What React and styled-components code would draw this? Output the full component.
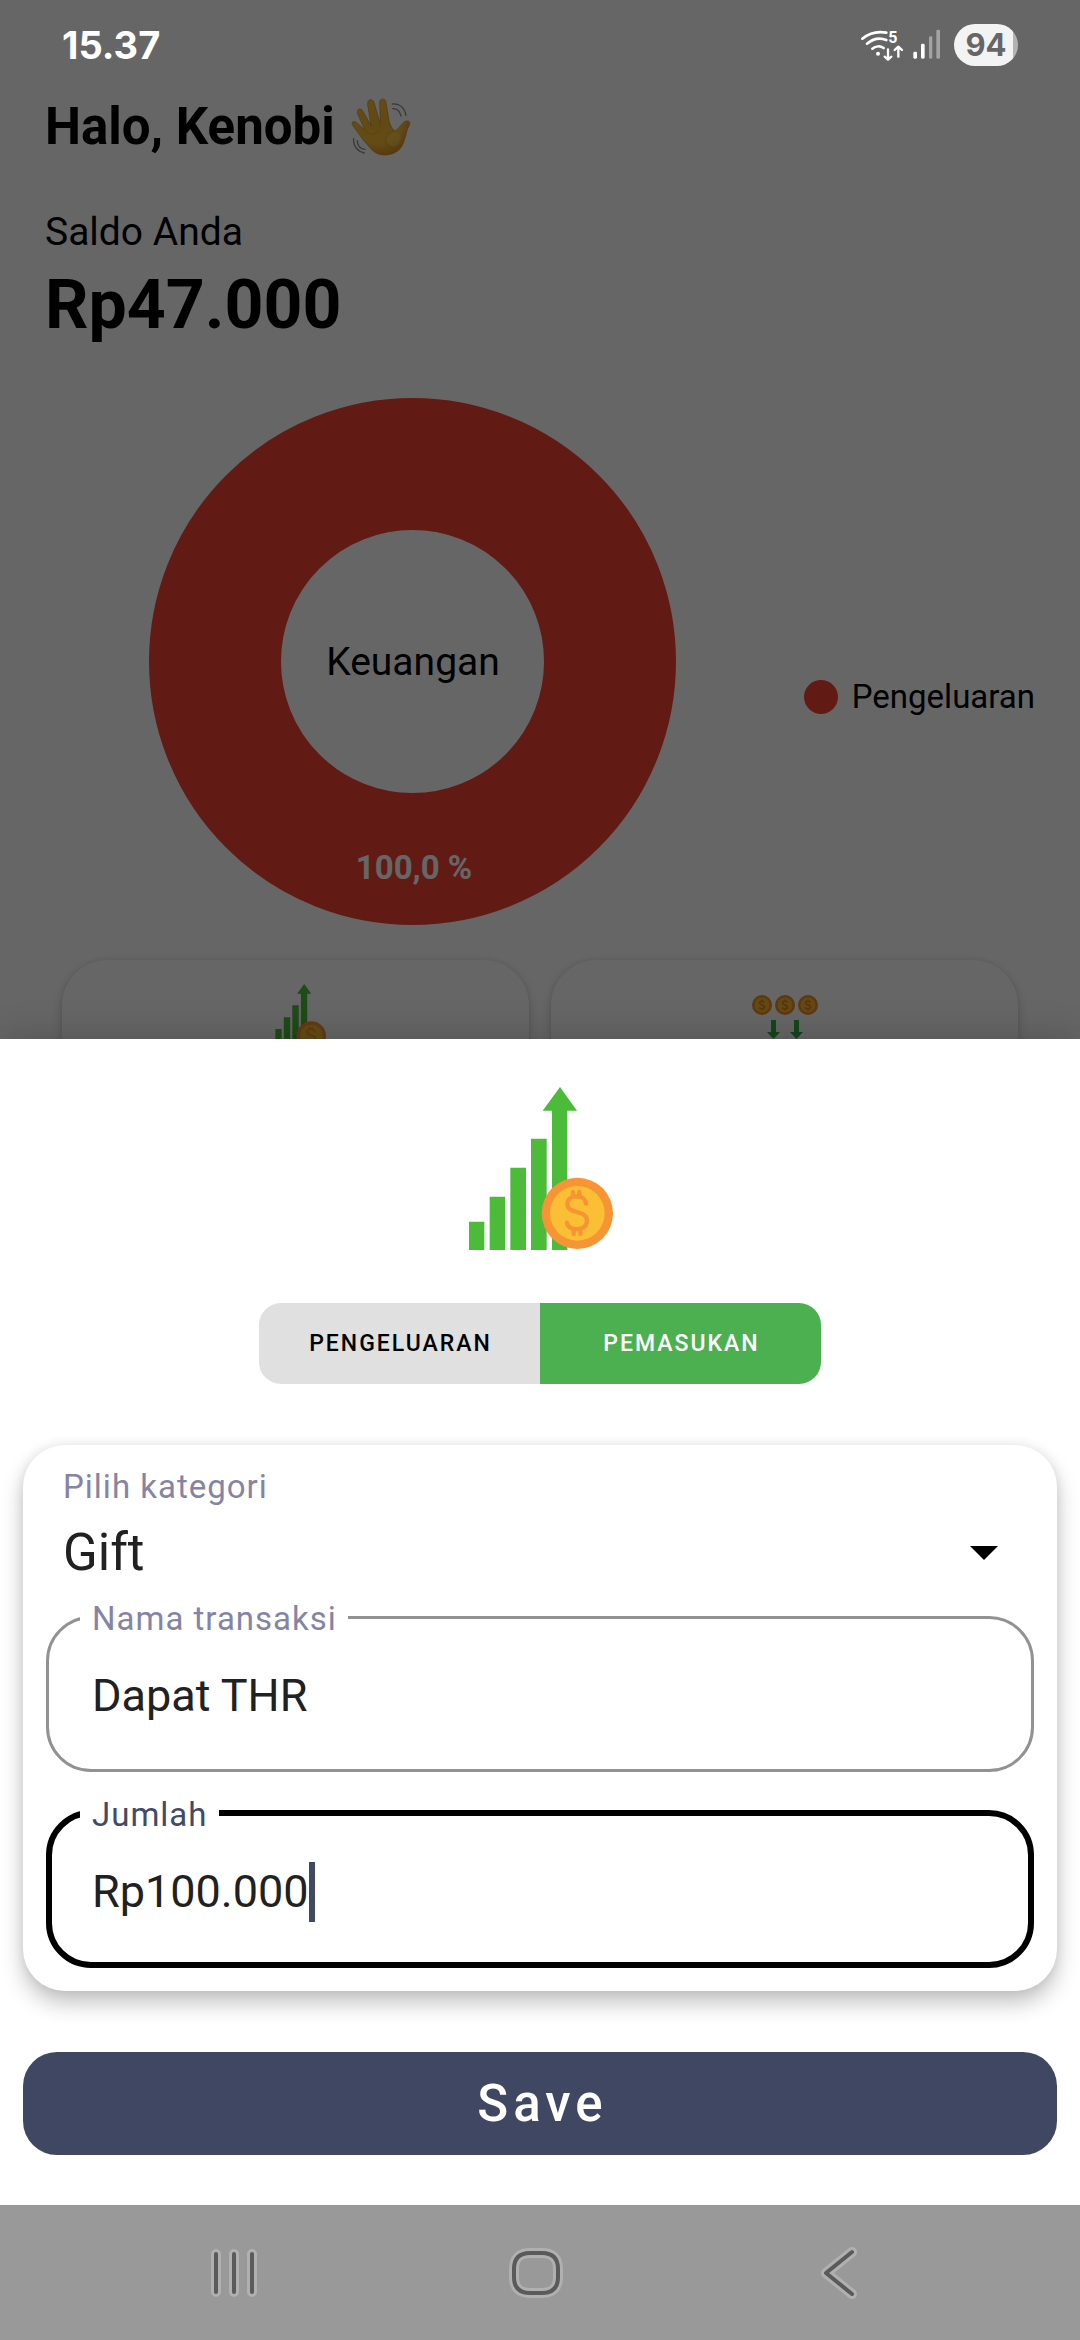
import React, { useState } from "react";
import styled, { createGlobalStyle, css } from "styled-components";

const GlobalStyle = createGlobalStyle`
  *, *::before, *::after { box-sizing: border-box; }
  body {
    margin: 0;
    background: #fff;
    color: #000;
    font-family: Roboto, "Noto Sans", sans-serif;
  }
  button, input, select { font: inherit; margin: 0; }
`;

/* The dashboard and the modal layer share one grid cell, so the layer lies over it. */
const Screen = styled.div`
  display: grid;
  grid-template-rows: minmax(100vh, auto);
  overflow: hidden;
`;

const Home = styled.main`
  grid-area: 1 / 1;
  height: 0;
  min-height: 100%;
  overflow: hidden;
  display: flex;
  flex-direction: column;
  padding: 97px 45px 0;
  background: #fff;
`;

const Modal = styled.div`
  grid-area: 1 / 1;
  z-index: 1;
  display: flex;
  flex-direction: column;
  background: rgba(0, 0, 0, 0.6);
`;

const Greeting = styled.h1`
  display: flex;
  align-items: center;
  gap: 16px;
  margin: 0 0 52px;
  font-size: 51px;
  line-height: 60px;
  font-weight: 700;
`;

const BalanceLabel = styled.p`
  margin: 0 0 10px;
  font-size: 39px;
  line-height: 46px;
`;

const Balance = styled.p`
  margin: 0;
  font-size: 68px;
  line-height: 80px;
  font-weight: 700;
`;

const ChartRow = styled.section`
  display: flex;
  align-items: center;
  gap: 24px;
  margin-top: 53px;
`;

const ChartArea = styled.div`
  flex: 1;
  display: flex;
  justify-content: center;
`;

const Legend = styled.ul`
  list-style: none;
  margin: 0;
  padding: 70px 0 0;
`;

const LegendItem = styled.li`
  display: flex;
  align-items: center;
  gap: 14px;
  font-size: 33px;
  line-height: 40px;

  &::before {
    content: "";
    width: 34px;
    height: 34px;
    border-radius: 50%;
    background: ${(p) => p.$color};
  }
`;

const Cards = styled.section`
  display: grid;
  grid-template-columns: 1fr 1fr;
  gap: 22px;
  padding: 0 17px;
  margin-top: 35px;
`;

const HomeCard = styled.div`
  display: flex;
  justify-content: center;
  padding: 24px 24px 120px;
  border-radius: 45px;
  background: #fff;
  box-shadow: 0 4px 12px rgba(0, 0, 0, 0.18), 0 0 4px rgba(0, 0, 0, 0.08);
`;

const StatusBar = styled.header`
  display: flex;
  align-items: center;
  justify-content: space-between;
  height: 90px;
  padding: 0 62px;
  color: #fff;
`;

const Clock = styled.time`
  font-family: Inter, Roboto, sans-serif;
  font-size: 38px;
  line-height: 46px;
  font-weight: 700;
`;

const StatusIcons = styled.div`
  display: flex;
  align-items: center;
  gap: 12px;
`;

const Battery = styled.span`
  display: flex;
  align-items: center;
  justify-content: center;
  width: 64px;
  height: 42px;
  border-radius: 21px;
  background: linear-gradient(to right, #f3f3f3 92%, #b3b3b3 92%);
  color: #666;
  font-family: Inter, Roboto, sans-serif;
  font-size: 31px;
  line-height: 40px;
  font-weight: 700;
`;

const Sheet = styled.form`
  display: flex;
  flex-direction: column;
  margin-top: auto;
  padding: 48px 23px 50px;
  background: #fff;
  box-shadow: 0 0 36px rgba(0, 0, 0, 0.2);
`;

const SheetIcon = styled.div`
  display: flex;
  justify-content: center;
  margin-bottom: 53px;
`;

const Toggle = styled.div`
  align-self: center;
  display: flex;
  width: 562px;
  max-width: 100%;
  height: 81px;
  border-radius: 22px;
  overflow: hidden;
`;

const ToggleButton = styled.button`
  flex: 1;
  border: 0;
  padding: 0 0 0 2px;
  font-size: 23px;
  line-height: 28px;
  font-weight: 500;
  letter-spacing: 2px;
  color: ${(p) => (p.$active ? "#fff" : "#000")};
  background: ${(p) => (p.$active ? "#4caf50" : "#e0e0e0")};
`;

const FormCard = styled.div`
  display: flex;
  flex-direction: column;
  margin: 61px 0;
  padding: 22px 23px 23px;
  border-radius: 42px;
  background: #fff;
  box-shadow: 0 12px 22px rgba(0, 0, 0, 0.24), 0 0 12px rgba(0, 0, 0, 0.08);
`;

const labelText = css`
  font-size: 33px;
  line-height: 40px;
  letter-spacing: 1px;
  color: ${(p) => (p.$focused ? "#424a66" : "#8484a4")};
`;

const SelectLabel = styled.label`
  ${labelText}
  padding-left: 17px;
`;

const SelectRow = styled.div`
  display: flex;
  align-items: center;
  margin: 16px 0 12px;
  padding: 0 36px 0 17px;
`;

const Select = styled.select`
  flex: 1;
  appearance: none;
  border: 0;
  padding: 0;
  background: transparent;
  color: #212121;
  font-size: 51px;
  line-height: 60px;
  outline: none;
`;

const Field = styled.fieldset`
  --line: ${(p) => (p.$focused ? "6px" : "3px")};
  min-width: 0;
  margin: 0;
  padding: 27px 32px calc(46px - var(--line)) calc(34px - var(--line));
  border: var(--line) solid ${(p) => (p.$focused ? "#000" : "#929292")};
  border-radius: 45px;

  & + & { margin-top: 19px; }
`;

const FieldLegend = styled.legend`
  ${labelText}
  padding: 4px 11px 0 12px;
`;

const InputRow = styled.div`
  display: flex;
  align-items: center;
  padding-left: 12px;
`;

const Input = styled.input`
  ${(p) => (p.$focused ? "field-sizing: content;" : "flex: 1;")}
  min-width: 0;
  height: 60px;
  border: 0;
  padding: 0;
  background: transparent;
  color: #212121;
  caret-color: transparent;
  font-size: 45px;
  line-height: 60px;
  outline: none;
`;

const Caret = styled.span`
  width: 6px;
  height: 60px;
  background: #404862;
`;

const SaveButton = styled.button`
  height: 103px;
  border: 0;
  border-radius: 34px;
  padding: 0 0 0 5px;
  background: #404762;
  color: #fff;
  font-size: 51px;
  line-height: 60px;
  font-weight: 500;
  letter-spacing: 5px;
`;

const NavBar = styled.nav`
  display: grid;
  grid-template-columns: repeat(3, 1fr);
  height: 135px;
  padding: 0 90px 0 83px;
  background: #999;
`;

const NavButton = styled.button`
  display: flex;
  align-items: center;
  justify-content: center;
  border: 0;
  padding: 0;
  background: transparent;
`;

function WavingHand() {
  return (
    <svg width="60" height="58" viewBox="31 23 180 174" role="img" aria-label="👋">
      <defs>
        <radialGradient id="palm" cx="0.45" cy="0.4" r="0.65">
          <stop offset="0" stopColor="#f5b733" />
          <stop offset="0.6" stopColor="#f9bd3a" />
          <stop offset="1" stopColor="#d98a1e" />
        </radialGradient>
      </defs>
      <path
        d="M35 103C32 94 40 91 47 96L73 119L51 71C47 60 56 50 65 60L91 105L81 43C79 27 95 22 100 36L119 101L117 36C117 23 134 22 136 36L146 96C150 107 155 120 162 121C169 121 180 104 188 97C198 87 212 92 206 104C198 117 197 137 188 158C179 184 153 195 130 194C108 193 98 184 86 170L67 148Z"
        fill="url(#palm)"
        stroke="#cf8a20"
        strokeWidth="2"
      />
      <path
        d="M145 97C152 112 155 119 162 121C145 124 133 136 133 150C134 164 145 171 156 168"
        fill="none"
        stroke="#dd9526"
        strokeWidth="4"
        opacity="0.4"
      />
      <path d="M73 119C88 140 105 130 117 119M91 105L100 116M119 101L121 111" fill="none" stroke="#d98f22" strokeWidth="3" opacity="0.5" />
      <ellipse cx="160" cy="147" rx="22" ry="19" fill="#ffd35c" opacity="0.45" transform="rotate(-50 160 147)" />
      <g fill="none" stroke="#8a8f94" strokeWidth="4" strokeLinecap="round">
        <path d="M155 41C178 39 192 54 196 75" />
        <path d="M156 55C170 54 178 64 181 77" />
        <path d="M39 145C37 166 50 183 71 188" />
        <path d="M50 151C50 165 59 175 73 177" />
      </g>
    </svg>
  );
}

function DonutChart() {
  return (
    <svg width="527" height="527" viewBox="0 0 527 527" role="img" aria-label="Keuangan">
      <circle cx="263.5" cy="263.5" r="197.5" fill="none" stroke="#f44336" strokeWidth="132" />
      <g textAnchor="middle" fontFamily="Roboto, sans-serif">
        <text x="264" y="277" fontSize="39">Keuangan</text>
        <text x="265" y="481" fontSize="33" fontWeight="700" fill="#fff">100,0 %</text>
      </g>
    </svg>
  );
}

function GrowthIcon({ width, height }) {
  return (
    <svg width={width} height={height} viewBox="60 81 480 489" aria-hidden="true">
      <g fill="#4cbb3a">
        <path d="M87 485h46v85H87zM149 410h46v160h-46zM211 323h47v247h-47zM273 236h47v334h-47z" />
        <path d="M360 81l51 71h-29v418h-46V152h-28z" />
      </g>
      <circle cx="412" cy="460" r="107" fill="#f79433" />
      <circle cx="412" cy="460" r="82" fill="#fbbf35" />
      <g fill="none" stroke="#f79433" strokeWidth="13" strokeLinecap="round">
        <path d="M438 431C436 402 382 402 382 432C382 464 441 448 441 482C441 516 382 514 381 488" />
        <path d="M399 396v14M418 396v14M401 508v14M421 508v14" />
      </g>
    </svg>
  );
}

function Coin({ x }) {
  return (
    <g>
      <circle cx={x} cy="21" r="10" fill="#ee8b2c" />
      <circle cx={x} cy="21" r="7.5" fill="#f9b92f" />
      <path
        d={`M${x + 2.3} 18.6C${x + 2} 16.6 ${x - 2.4} 16.6 ${x - 2.4} 18.8C${x - 2.4} 21.3 ${x + 2.5} 20.6 ${x + 2.5} 23.1C${x + 2.5} 25.4 ${x - 2.3} 25.3 ${x - 2.5} 23.4M${x} 15.6V17.2M${x} 24.8V26.4`}
        fill="none"
        stroke="#e38325"
        strokeWidth="1.8"
      />
    </g>
  );
}

function SpendingIcon() {
  return (
    <svg width="66" height="67" viewBox="0 0 66 67" aria-hidden="true">
      <Coin x={10} />
      <Coin x={33} />
      <Coin x={56} />
      <g fill="#2fb344">
        <path d="M19 36h5v12h4l-6.500 7l-6.500-7h4zM42 36h5v12h4l-6.500 7l-6.500-7h4z" />
      </g>
    </svg>
  );
}

function NetworkIcons() {
  return (
    <svg width="82" height="34" viewBox="119 85 246 102" role="img" aria-label="Wi-Fi 5">
      <g fill="none" stroke="#fff" strokeWidth="8" strokeLinecap="round">
        <path d="M126 117C147 100 172 94 198 99" />
        <path d="M140 132C158 117 179 113 198 121" />
        <path d="M156 147C166 139 180 138 190 145" />
        <path d="M203 149V179M193 171L203 180L213 171M234 171V142M223 151L234 141L245 151" strokeWidth="7" strokeLinejoin="round" />
      </g>
      <circle cx="173" cy="162" r="6" fill="#fff" />
      <text x="204" y="131" fontSize="48" fontWeight="700" fontFamily="Roboto, sans-serif" fill="#fff">5</text>
      <g fill="#fff">
        <rect x="279" y="156" width="11" height="21" rx="4" />
        <rect x="302" y="132" width="11" height="45" rx="4" />
        <rect x="326" y="110" width="10" height="67" rx="4" opacity="0.4" />
        <rect x="348" y="90" width="11" height="87" rx="4" opacity="0.4" />
      </g>
    </svg>
  );
}

const navShapes = {
  recents: "M12 9v38M30 9v38M48 9v38",
  home: "M24 8h12q16 0 16 16v8q0 16 -16 16h-12q-16 0 -16 -16v-8q0 -16 16 -16z",
  back: "M43 7L17 28L43 49",
};

function NavIcon({ shape }) {
  const d = navShapes[shape];
  return (
    <svg width="60" height="56" viewBox="0 0 60 56" fill="none" strokeLinecap="round" strokeLinejoin="round" aria-hidden="true">
      <path d={d} stroke="#b0b0b0" strokeWidth="10" />
      <path d={d} stroke="#5a5a5a" strokeWidth="4" />
    </svg>
  );
}

export default function App() {
  const [kind, setKind] = useState("PEMASUKAN");
  const [category, setCategory] = useState("Gift");
  const [name, setName] = useState("Dapat THR");
  const [amount, setAmount] = useState("Rp100.000");

  return (
    <>
      <GlobalStyle />
      <Screen>
        <Home>
          <Greeting>
            Halo, Kenobi <WavingHand />
          </Greeting>
          <BalanceLabel>Saldo Anda</BalanceLabel>
          <Balance>Rp47.000</Balance>
          <ChartRow>
            <ChartArea>
              <DonutChart />
            </ChartArea>
            <Legend>
              <LegendItem $color="#f44336">Pengeluaran</LegendItem>
            </Legend>
          </ChartRow>
          <Cards>
            <HomeCard>
              <GrowthIcon width="66" height="67" />
            </HomeCard>
            <HomeCard>
              <SpendingIcon />
            </HomeCard>
          </Cards>
        </Home>

        <Modal>
          <StatusBar>
            <Clock>15.37</Clock>
            <StatusIcons>
              <NetworkIcons />
              <Battery>94</Battery>
            </StatusIcons>
          </StatusBar>

          <Sheet onSubmit={(e) => e.preventDefault()}>
            <SheetIcon>
              <GrowthIcon width="160" height="163" />
            </SheetIcon>
            <Toggle role="group">
              {["PENGELUARAN", "PEMASUKAN"].map((item) => (
                <ToggleButton
                  key={item}
                  type="button"
                  $active={kind === item}
                  aria-pressed={kind === item}
                  onClick={() => setKind(item)}
                >
                  {item}
                </ToggleButton>
              ))}
            </Toggle>

            <FormCard>
              <SelectLabel htmlFor="category">Pilih kategori</SelectLabel>
              <SelectRow>
                <Select id="category" value={category} onChange={(e) => setCategory(e.target.value)}>
                  <option>Gift</option>
                </Select>
                <svg width="28" height="14" viewBox="0 0 28 14" aria-hidden="true">
                  <path d="M0 0h28L14 14z" />
                </svg>
              </SelectRow>
              <Field>
                <FieldLegend>
                  <label htmlFor="name">Nama transaksi</label>
                </FieldLegend>
                <InputRow>
                  <Input id="name" type="text" value={name} onChange={(e) => setName(e.target.value)} />
                </InputRow>
              </Field>
              <Field $focused>
                <FieldLegend $focused>
                  <label htmlFor="amount">Jumlah</label>
                </FieldLegend>
                <InputRow>
                  <Input $focused id="amount" type="text" value={amount} onChange={(e) => setAmount(e.target.value)} />
                  <Caret />
                </InputRow>
              </Field>
            </FormCard>

            <SaveButton type="submit">Save</SaveButton>
          </Sheet>

          <NavBar>
            <NavButton type="button" aria-label="Recents">
              <NavIcon shape="recents" />
            </NavButton>
            <NavButton type="button" aria-label="Home">
              <NavIcon shape="home" />
            </NavButton>
            <NavButton type="button" aria-label="Back">
              <NavIcon shape="back" />
            </NavButton>
          </NavBar>
        </Modal>
      </Screen>
    </>
  );
}
